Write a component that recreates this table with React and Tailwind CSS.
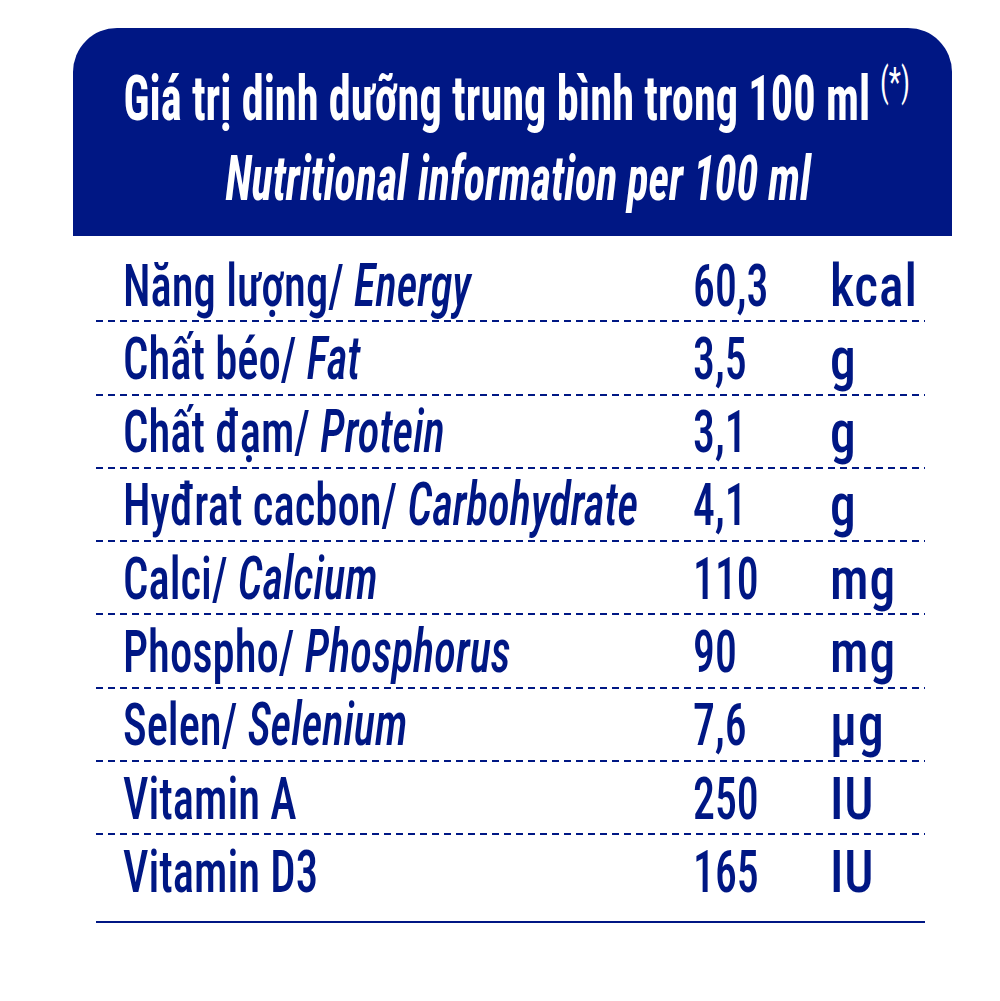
const ROWS = [
  { vi: 'Năng lượng/ ', en: 'Energy', value: '60,3', unit: 'kcal' },
  { vi: 'Chất béo/ ', en: 'Fat', value: '3,5', unit: 'g' },
  { vi: 'Chất đạm/ ', en: 'Protein', value: '3,1', unit: 'g' },
  { vi: 'Hyđrat cacbon/ ', en: 'Carbohydrate', value: '4,1', unit: 'g' },
  { vi: 'Calci/ ', en: 'Calcium', value: '110', unit: 'mg' },
  { vi: 'Phospho/ ', en: 'Phosphorus', value: '90', unit: 'mg' },
  { vi: 'Selen/ ', en: 'Selenium', value: '7,6', unit: 'µg' },
  { vi: 'Vitamin A', en: '', value: '250', unit: 'IU' },
  { vi: 'Vitamin D3', en: '', value: '165', unit: 'IU' },
]

function Row({ row, last }) {
  return (
    <div>
      <div className="grid grid-cols-[597px_137px_1fr] h-[71.3px] pt-[6.5px] text-[60px] leading-[60px] font-[480] whitespace-nowrap">
        <div className="pl-[27px]">
          <span className="inline-block origin-left scale-x-[0.745]">
            {row.vi}
            {row.en && <i>{row.en}</i>}
          </span>
        </div>
        <div>
          <span className="inline-block origin-left scale-x-[0.73]">{row.value}</span>
        </div>
        <div>
          <span className="inline-block origin-left scale-x-[0.86] tracking-[1px]">{row.unit}</span>
        </div>
      </div>
      {!last && (
        <div className="h-[2px] bg-[repeating-linear-gradient(90deg,#001784_0_7px,transparent_7px_12px)]" />
      )}
    </div>
  )
}

export default function App() {
  return (
    <div className="w-[1000px] h-[1001px] bg-white pt-[28px] font-['Roboto_Condensed',Roboto,sans-serif] font-stretch-condensed text-[#001784]">
      {/* header */}
      <div className="ml-[73px] w-[879px] h-[208px] bg-[#001784] rounded-t-[44px] pt-[35px] text-white font-bold text-[63px] leading-[72px] overflow-hidden">
        <div className="flex justify-center whitespace-nowrap">
          <span className="inline-block translate-x-[4px] scale-x-[0.705]">
            Giá trị dinh dưỡng trung bình trong 100 ml
            <span className="relative -top-[24px] ml-[14px] text-[40px] font-normal">(*)</span>
          </span>
        </div>
        <div className="flex justify-center whitespace-nowrap">
          <span className="inline-block translate-x-[6px] scale-x-[0.70] italic">Nutritional information per 100 ml</span>
        </div>
      </div>

      {/* table */}
      <div className="ml-[96px] w-[829px] mt-[13px]">
        {ROWS.map((r, i) => (
          <Row key={i} row={r} last={i === ROWS.length - 1} />
        ))}
        <div className="h-[2px] bg-[#001784] mt-[14px]" />
      </div>
    </div>
  )
}
